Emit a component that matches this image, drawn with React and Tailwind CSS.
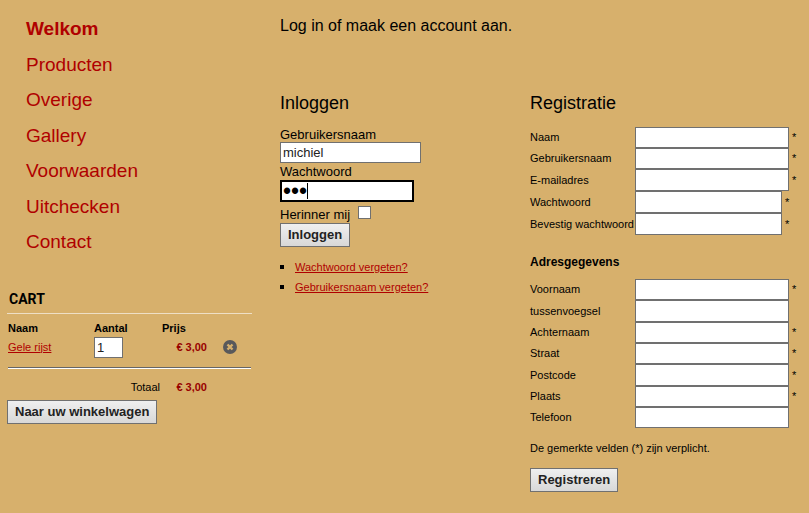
import React, { useState } from 'react';

const menuItems = ['Welkom', 'Producten', 'Overige', 'Gallery', 'Voorwaarden', 'Uitchecken', 'Contact'];

const accountFields = [
    { id: 'naam', label: 'Naam', required: true },
    { id: 'gebruikersnaam', label: 'Gebruikersnaam', required: true },
    { id: 'email', label: 'E-mailadres', required: true, tall: true },
    { id: 'wachtwoord', label: 'Wachtwoord', type: 'password', required: true, tall: true },
    { id: 'bevestig', label: 'Bevestig wachtwoord', type: 'password', required: true, tall: true },
];

const addressFields = [
    { id: 'voornaam', label: 'Voornaam', required: true },
    { id: 'tussenvoegsel', label: 'tussenvoegsel', tall: true },
    { id: 'achternaam', label: 'Achternaam', required: true },
    { id: 'straat', label: 'Straat', required: true },
    { id: 'postcode', label: 'Postcode', required: true, tall: true },
    { id: 'plaats', label: 'Plaats', required: true },
    { id: 'telefoon', label: 'Telefoon' },
];

function Button({ children, type = 'button' }) {
    return (
        <button
            type={type}
            className="h-6 border border-[#707070] bg-linear-to-b from-[#efefef] to-[#d8d8d8] px-[7px] text-[13px] leading-5 font-bold text-[#222222]"
        >
            {children}
        </button>
    );
}

function FieldRow({ field }) {
    return (
        <div className={`flex items-center text-[11px] ${field.tall ? 'h-[22px]' : 'h-[21px]'}`}>
            <label htmlFor={field.id} className="w-[105px] shrink-0 whitespace-nowrap">{field.label}</label>
            <input
                id={field.id}
                type={field.type || 'text'}
                className={`h-full border border-[#707070] bg-white px-0.5 text-[13px] outline-none ${field.type === 'password' ? 'w-[147px]' : 'w-[154px]'}`}
            />
            {field.required && <span className="pl-[3px]">*</span>}
        </div>
    );
}

function Menu() {
    return (
        <nav className="pt-[11px] pl-[26px]">
            <ul className="text-[19px] text-[#b00000]">
                {menuItems.map((item, i) => (
                    <li key={item} className="odd:h-9 even:h-[35px] leading-9">
                        <a href="#" className={i === 0 ? 'font-bold' : ''}>{item}</a>
                    </li>
                ))}
            </ul>
        </nav>
    );
}

function Cart() {
    const [amount, setAmount] = useState('1');

    return (
        <section className="mt-7 ml-[7px] w-[245px] text-[11px]">
            <h2 className="border-b border-[#eedfc6] pt-px pb-1 pl-0.5 font-[Roboto,sans-serif] text-[14px] leading-5 font-bold">CART</h2>
            <table className="mt-1.5 ml-px w-[243px] table-fixed">
                <colgroup>
                    <col className="w-[86px]" />
                    <col className="w-[68px]" />
                    <col className="w-[45px]" />
                    <col />
                </colgroup>
                <thead>
                    <tr className="h-4 text-left">
                        <th>Naam</th>
                        <th>Aantal</th>
                        <th>Prijs</th>
                        <td></td>
                    </tr>
                </thead>
                <tbody>
                    <tr className="h-[21px]">
                        <td><a href="#" className="text-[#b00000] underline">Gele rijst</a></td>
                        <td>
                            <input
                                type="text"
                                aria-label="Aantal"
                                className="block h-[21px] w-[29px] border border-[#707070] bg-white px-0.5 text-[13px] text-[#222222] outline-none"
                                value={amount}
                                onChange={e => setAmount(e.target.value)}
                            />
                        </td>
                        <td className="text-right font-bold text-[#990000]">€ 3,00</td>
                        <td className="pl-4">
                            <button type="button" aria-label="Verwijderen" className="block">
                                <svg width="14" height="14" viewBox="0 0 14 14">
                                    <circle cx="7" cy="7" r="7" fill="#59595b" />
                                    <path d="M4.5 4.5 L9.5 9.5 M9.5 4.5 L4.5 9.5" stroke="#d7b06c" strokeWidth="2.4" />
                                </svg>
                            </button>
                        </td>
                    </tr>
                </tbody>
                <tfoot>
                    <tr>
                        <td colSpan="4" className="pt-[9px] pb-2.5">
                            <hr className="h-0.5 border-t border-b border-t-[#666666] border-b-white" />
                        </td>
                    </tr>
                    <tr className="h-4">
                        <td colSpan="2" className="pr-0.5 text-right">Totaal</td>
                        <td className="text-right font-bold text-[#990000]">€ 3,00</td>
                        <td></td>
                    </tr>
                </tfoot>
            </table>
            <div className="mt-[5px]">
                <Button>Naar uw winkelwagen</Button>
            </div>
        </section>
    );
}

function LoginForm() {
    const [username, setUsername] = useState('michiel');
    const [password, setPassword] = useState('abc');

    return (
        <section>
            <h2 className="text-[18px] leading-6">Inloggen</h2>
            <form className="mt-3 text-[13px]" onSubmit={e => e.preventDefault()}>
                <label htmlFor="login-naam" className="block leading-[15px]">Gebruikersnaam</label>
                <input
                    id="login-naam"
                    type="text"
                    className="block h-[21px] w-[141px] border border-[#707070] bg-white px-0.5 text-[#222222] outline-none"
                    value={username}
                    onChange={e => setUsername(e.target.value)}
                />
                <label htmlFor="login-wachtwoord" className="block leading-[17px]">Wachtwoord</label>
                <div className="relative w-[134px]">
                    <input
                        id="login-wachtwoord"
                        type="password"
                        className="block h-[22px] w-full border-2 border-black bg-white px-px text-[23px] leading-[18px] caret-transparent outline-none"
                        value={password}
                        onChange={e => setPassword(e.target.value)}
                    />
                    <span className="absolute top-[3px] left-[27px] h-4 w-px bg-black" />
                </div>
                <div className="flex h-[21px] items-center gap-2">
                    <label htmlFor="herinner" className="pt-1">Herinner mij</label>
                    <input id="herinner" type="checkbox" className="size-[13px] appearance-none border border-[#707070] bg-white checked:bg-[#707070]" />
                </div>
                <Button type="submit">Inloggen</Button>
            </form>
            <ul className="mt-2.5 text-[11px] leading-5">
                {['Wachtwoord vergeten?', 'Gebruikersnaam vergeten?'].map(text => (
                    <li key={text} className="flex items-center gap-[11px]">
                        <span className="size-1 bg-black" />
                        <a href="#" className="text-[#b00000] underline">{text}</a>
                    </li>
                ))}
            </ul>
        </section>
    );
}

function RegisterForm() {
    return (
        <section>
            <h2 className="text-[18px] leading-6">Registratie</h2>
            <form className="mt-3" onSubmit={e => e.preventDefault()}>
                {accountFields.map(field => <FieldRow key={field.id} field={field} />)}
                <h3 className="mt-[17px] mb-[7px] text-[12px] leading-5 font-bold">Adresgegevens</h3>
                {addressFields.map(field => <FieldRow key={field.id} field={field} />)}
                <p className="mt-3 mb-[11px] text-[11px] leading-4">De gemerkte velden (*) zijn verplicht.</p>
                <Button type="submit">Registreren</Button>
            </form>
        </section>
    );
}

export default function App() {
    return (
        <div className="grid min-h-screen grid-cols-[280fr_529fr] bg-[#d7b06c] font-['Liberation_Sans',Arial,sans-serif] text-black">
            <aside>
                <Menu />
                <Cart />
            </aside>
            <main className="pt-3.5">
                <p className="text-[16px] leading-6">Log in of maak een account aan.</p>
                <div className="mt-[53px] grid grid-cols-[250fr_279fr]">
                    <LoginForm />
                    <RegisterForm />
                </div>
            </main>
        </div>
    );
}
